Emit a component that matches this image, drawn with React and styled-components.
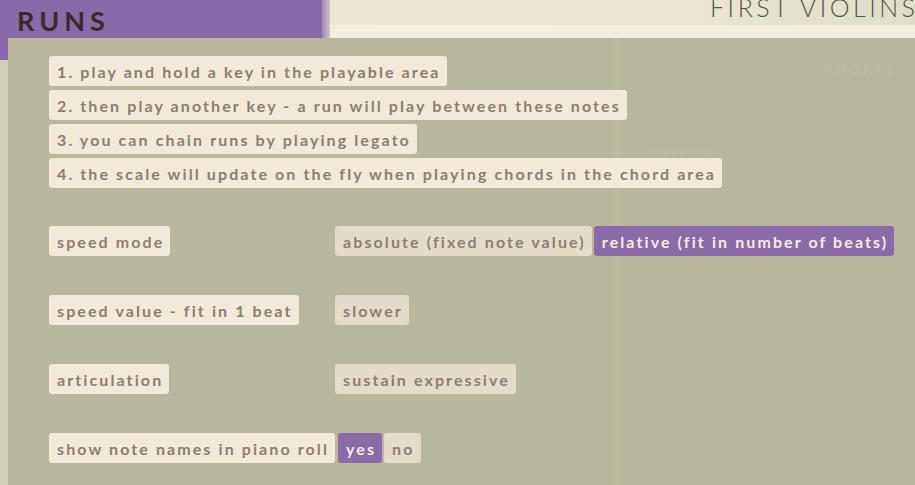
import React from 'react';
import styled, { createGlobalStyle } from 'styled-components';

const GlobalStyle = createGlobalStyle`
    html, body {
        margin: 0;
        padding: 0;
        background: #d2d3b6;
        overflow: hidden;
    }
`

const Frame = styled.div`
    width: 915px;
    height: 485px;
    display: flex;
    flex-direction: column;
    overflow: hidden;
    font-family: Lato, "Noto Sans", sans-serif;
`

const Header = styled.div`
    height: 38px;
    display: flex;
    flex-shrink: 0;
`

const TitlePanel = styled.div`
    width: 322px;
    background: #8a69a8;
    padding-left: 17px;
    box-sizing: border-box;

    h1 {
        margin: 0;
        margin-top: 5px;
        font-size: 27px;
        line-height: 32px;
        font-weight: 700;
        letter-spacing: 5px;
        color: #3b2b26;
    }
`

const Divider = styled.div`
    width: 8px;
    background: linear-gradient(90deg, #9c88b0, #cfc6c4);
`

const InstrumentBar = styled.div`
    flex: 1;
    display: flex;
    flex-direction: column;
    background: linear-gradient(90deg, #ede8d6 0%, #ebe6d3 60%, #dedfc8 100%);
    overflow: hidden;

    .name {
        height: 25px;
        padding-left: 380px;
        white-space: nowrap;
        font-size: 25px;
        line-height: 25px;
        font-weight: 300;
        letter-spacing: 3.5px;
        color: #55544c;
        margin-top: -5px;
        padding-bottom: 5px;
    }

    .band {
        flex: 1;
        background: #f4eedd;
    }
`

const Body = styled.div`
    flex: 1;
    display: flex;
`

const SideStrip = styled.div`
    width: 8px;
    background: linear-gradient(180deg, #8a69a8 0 22px, #d2d3b6 22px);
`

const Panel = styled.div`
    flex: 1;
    position: relative;
    background: #b9b89d;
    padding: 18px 0 0 41px;
`

const Stripe = styled.div`
    position: absolute;
    top: 0;
    bottom: 0;
    left: 606px;
    width: 7px;
    background: #bcbb9e;
`

const Ghost = styled.div`
    position: absolute;
    left: ${p => p.x}px;
    top: ${p => p.y}px;
    font-size: ${p => p.size || 14}px;
    font-weight: 700;
    letter-spacing: 2px;
    color: #bdbca1;
`

const Content = styled.div`
    position: relative;
`

const Steps = styled.div`
    display: flex;
    flex-direction: column;
    align-items: flex-start;
    gap: 4px;
`

const Settings = styled.div`
    margin-top: 38px;
    display: flex;
    flex-direction: column;
    gap: 39px;
`

const SettingRow = styled.div`
    display: grid;
    grid-template-columns: ${p => p.tight ? 'auto 1fr' : '286px 1fr'};
    column-gap: ${p => p.tight ? '3px' : '0'};
    align-items: center;
    justify-items: start;
`

const Options = styled.div`
    display: flex;
    gap: 2px;
`

const Chip = styled.div`
    height: 30px;
    display: inline-flex;
    align-items: center;
    box-sizing: border-box;
    padding: 0 6px 0 8px;
    border-radius: 3px;
    font-size: 16px;
    font-weight: 700;
    letter-spacing: 2.1px;
    white-space: nowrap;
    color: ${p => p.active ? '#f3ede4' : '#8a8070'};
    background: ${p => p.active ? '#8c6aa8' : p.option ? '#e3ddc7' : '#f1ead9'};
`

const steps = [
    '1. play and hold a key in the playable area',
    '2. then play another key - a run will play between these notes',
    '3. you can chain runs by playing legato',
    '4. the scale will update on the fly when playing chords in the chord area',
]

const settings = [
    {
        label: 'speed mode',
        options: [
            { text: 'absolute (fixed note value)' },
            { text: 'relative (fit in number of beats)', active: true },
        ],
    },
    { label: 'speed value - fit in 1 beat', options: [{ text: 'slower' }] },
    { label: 'articulation', options: [{ text: 'sustain expressive' }] },
]

const App = () => {
    return (
        <Frame>
            <GlobalStyle />
            <Header>
                <TitlePanel>
                    <h1>RUNS</h1>
                </TitlePanel>
                <Divider />
                <InstrumentBar>
                    <div className="name">FIRST VIOLINS</div>
                    <div className="band" />
                </InstrumentBar>
            </Header>
            <Body>
                <SideStrip />
                <Panel>
                    <Stripe />
                    <Ghost x={817} y={21} size={15}>SHORTS</Ghost>
                    <Ghost x={641} y={105} size={13}>staccato</Ghost>
                    <Content>
                        <Steps>
                            {steps.map(step => <Chip key={step}>{step}</Chip>)}
                        </Steps>
                        <Settings>
                            {settings.map(setting => (
                                <SettingRow key={setting.label}>
                                    <Chip>{setting.label}</Chip>
                                    <Options>
                                        {setting.options.map(option => (
                                            <Chip
                                                key={option.text}
                                                option={!option.active}
                                                active={option.active}
                                            >
                                                {option.text}
                                            </Chip>
                                        ))}
                                    </Options>
                                </SettingRow>
                            ))}
                            <SettingRow tight>
                                <Chip>show note names in piano roll</Chip>
                                <Options>
                                    <Chip active>yes</Chip>
                                    <Chip option>no</Chip>
                                </Options>
                            </SettingRow>
                        </Settings>
                    </Content>
                </Panel>
            </Body>
        </Frame>
    )
}

export default App;
